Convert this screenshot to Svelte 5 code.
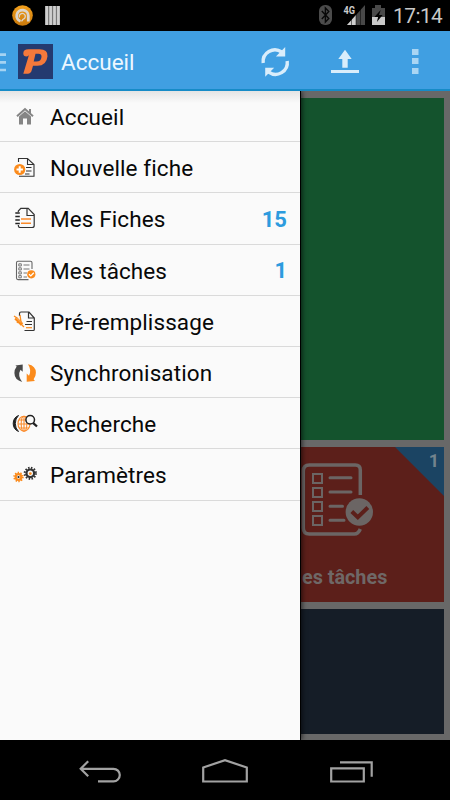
<script>
  const items = [
    { id: 'home', label: 'Accueil' },
    { id: 'new', label: 'Nouvelle fiche' },
    { id: 'forms', label: 'Mes Fiches', count: 15 },
    { id: 'tasks', label: 'Mes tâches', count: 1 },
    { id: 'prefill', label: 'Pré-remplissage' },
    { id: 'sync', label: 'Synchronisation' },
    { id: 'search', label: 'Recherche' },
    { id: 'settings', label: 'Paramètres' }
  ];
</script>

<div class="phone">
  <header class="status">
    <svg width="70" height="31" viewBox="0 0 70 31">
      <defs><linearGradient id="av" x2="0" y2="1"><stop stop-color="#f2a01c" /><stop offset="1" stop-color="#c9790c" /></linearGradient></defs>
      <circle cx="22.5" cy="15.5" r="10.3" fill="url(#av)" />
      <path d="M20.500 21.300A5.800 5.800 0 1 1 28.300 15.800V21.500" fill="none" stroke="#ddd6cc" stroke-width="2.800" />
      <path d="M19.500 17.500a3 3 0 1 1 3.500 1.800l-1.500 2" fill="none" stroke="#ddd6cc" stroke-width="1.300" />
      <path d="M45 6h15v19h-15z" fill="#777" />
      <path d="M46.700 6v19M50.600 6v19M54.500 6v19M58.400 6v19" stroke="#cfcfcf" stroke-width="2.700" />
    </svg>
    <div class="right">
      <svg width="70" height="31" viewBox="317 0 70 31">
        <rect x="319" y="5" width="13" height="20" rx="6" fill="#4b4b4b" />
        <path d="M321.800 11l7 7.500-3.400 3.500V8l3.400 3.500-7 7.500" fill="none" stroke="#080808" stroke-width="1.400" />
        <path d="M347 25l18-20v20z" fill="#484848" />
        <path d="M347 25l9-10v10z" fill="#d0d0d0" />
        <path d="M351.500 5v20M356 5v20M360.500 5v20" stroke="#000" stroke-width=".5" />
        <path d="M342 4h13v11h-13z" fill="#000" />
        <text x="343.500" y="14.300" font-size="11" font-weight="700" fill="#ccc" textLength="11.500" lengthAdjust="spacingAndGlyphs">4G</text>
        <path d="M372 8h3V5h6v3h4v9h-13z" fill="#494949" />
        <path d="M372 17h13v8h-13z" fill="#c9c9c9" />
        <path d="M380.700 10l-6.300 7h3.700l-1.200 5 5.700-7h-3.600z" fill="#000" />
      </svg>
      <span class="clock">17:14</span>
    </div>
  </header>

  <div class="bar">
    <svg class="logo" width="58" height="60" viewBox="0 31 58 60">
      <path d="M0 54.700h6M0 62.400h6M0 70h6" stroke="#a5d3f2" stroke-width="2.700" />
      <rect x="18" y="44" width="35" height="35" fill="#243a70" />
      <path d="M28.500 49.300H39.500q8.500 0 8 7-1 9.500-10 9.500H33l-1.200 4.200q-1 3.800-4 3.800H23.300L29 54.700q-.5 1.800-2.500 1.800-3.200 0-3.200-3.200 0-4 5.200-4zM35.500 53.800L33.700 61.500h2.800q4.500 0 5-4.500.2-3.200-3-3.200z" fill="#f5793b" fill-rule="evenodd" />
    </svg>
    <h1>Accueil</h1>
    <svg class="actions" width="200" height="60" viewBox="250 31 200 60">
      <g fill="none" stroke="#d9edfb" stroke-width="3.400">
        <path d="M263.200 63a11.800 11.800 0 0 1 18.500-11M287.200 61a11.800 11.800 0 0 1-18.500 11.200" />
      </g>
      <path d="M285.200 47v9.500h-9.300zM265.200 76.700v-9h9z" fill="#d9edfb" />
      <path d="M345 49.800l6.700 9.200h-4v8.700h-5.400V59h-4zM331 70h28v3h-28z" fill="#d9edfb" />
      <path d="M412 49h6.500v6H412zM412 58h6.500v6H412zM412 68h6.500v6H412z" fill="#a9d5f3" />
    </svg>
  </div>

  <main>
    <div class="tiles">
      <div class="tile green"></div>
      <div class="tile red">
        <svg width="76" height="76" viewBox="300 462 76 76" fill="none" stroke="#6b6564" stroke-width="3.500">
          <path d="M360.300 495V470q0-5-5-5h-46q-6 0-6 6v57q0 6 6 6h45q4 0 6-5" />
          <g stroke-width="2"><path d="M313 474h9v9h-9zM313 488h9v9h-9zM313 502h9v9h-9zM313 516h9v9h-9z" /></g>
          <path d="M330 477.700h21M330 492h21M330 506.300h12.500M330 520.200h14" stroke-linecap="round" stroke-width="3" />
          <circle cx="359.300" cy="512" r="13.700" fill="#6b6564" stroke="none" />
          <path d="M351.800 511.500l6 5.700 10-9.700" stroke="#5c1f1a" stroke-width="4" />
        </svg>
        <strong>Mes tâches</strong>
        <span class="corner">1</span>
      </div>
      <div class="tile navy"></div>
    </div>

    <nav>
      {#each items as item (item.id)}
        <a href="#{item.id}">
          <svg width="40" height="50" viewBox="0 0 40 50" fill="none">
            {#if item.id === 'home'}
              <path d="M17 25.300l8-7.300 8 7.300" stroke="#858585" stroke-width="2" />
              <path d="M19 25.500l6-5.300 6 5.300v8h-4v-6h-4v6h-4zM29 18h2v4h-2z" fill="#858585" />
            {:else if item.id === 'new'}
              <path d="M18.500 20v-3.500h9l6.500 6v11.800H19M27.500 16.500v6H34M26 25.500h5.500M26 29h5.500M25 32h4.500" stroke="#333" stroke-width="1.100" />
              <circle cx="19.700" cy="27.500" r="5.600" fill="#fb8b1c" />
              <path d="M19.700 24.300v6.400M16.500 27.500h6.400" stroke="#fff" stroke-width="2" />
            {:else if item.id === 'forms'}
              <path d="M18.300 19v-1l2.500-2.700h7.400l6 6.200v11q0 2-2 2H20q-1.700 0-1.700-2.500M27 16v6.500h7" stroke="#333" stroke-width="1.200" />
              <path d="M15.300 20h4.500M15.300 23.500h4.500M15.300 27h4.500M15.300 30.500h4.500" stroke="#222" stroke-width="1.700" />
              <path d="M21 26h10M21 30.200h10" stroke="#fb8b2c" stroke-width="1.400" />
            {:else if item.id === 'tasks'}
              <path d="M32 24v-6.300q0-1.500-1.500-1.500H18q-1.500 0-1.500 1.500v15.400q0 1.500 1.500 1.500h10.500" stroke="#666" stroke-width="1.100" />
              <path d="M18.800 18.800h2.500v2.200h-2.500zM18.800 22.800h2.500V25h-2.500zM18.800 26.800h2.500V29h-2.500zM18.800 30.600h2.500v2.200h-2.500zM23.500 20h6M23.500 24h6M23.500 28h3.500M23.500 32h3.500" stroke="#777" />
              <circle cx="31.300" cy="29.300" r="4.100" fill="#fb8b1c" />
              <path d="M29 29.200l1.800 1.700 3-3.200" stroke="#fff" stroke-width="1.300" />
            {:else if item.id === 'prefill'}
              <path d="M19.500 20v-2.500q0-1.500 1.500-1.500h8l5.300 6v11.500q0 1-1 1H24.500M28.500 16v6h6M26.500 25.500h5.500M25 28.500h7" stroke="#333" stroke-width="1.200" />
              <path d="M26 31.700h6" stroke="#fb8b1c" stroke-width="1.200" />
              <path d="M15.500 22l6.500 6.500" stroke="#fb8b1c" stroke-width="3.400" />
              <path d="M14 20l3 2M21 28l3 3M17 27l2-3M20 19l1 7" stroke="#fb8b1c" stroke-width="1.300" />
              <path d="M16.500 22l4.500 4.500" stroke="#ffd1a1" stroke-width=".6" />
            {:else if item.id === 'sync'}
              <path d="M22.700 17.500v7.300l-2.200-2.100q-3.300 5.800 1.700 12.200-7.800-2.100-7.800-8.900 0-3.500 2.300-6.400l-1.300-1z" fill="#484848" />
              <path d="M28 17.300q7.900 1.500 7.900 8.500 0 3.500-2.300 6.500l1.300 1.700-8.200.8v-8.400l2.300 2.300q2.900-5.300-1-11.400z" fill="#fb8b1c" />
            {:else if item.id === 'search'}
              <path d="M18.500 17.500q-5.300 2.200-5.300 8t5.300 8q-3.200-3-3.200-8t3.200-8z" fill="#222" stroke="#222" />
              <g stroke="#fb8b2c" stroke-width="1.100"><ellipse cx="24" cy="25.700" rx="6" ry="7.500" /><ellipse cx="24" cy="25.700" rx="2.800" ry="7.500" /><path d="M24 18v15M19 22h10M18 26h12M19 30h10" /></g>
              <circle cx="30.200" cy="21.800" r="4.300" fill="#fafafa" stroke="#222" stroke-width="1.500" />
              <path d="M33 24.800l4 3.700" stroke="#222" stroke-width="2.300" />
            {:else}
              <circle cx="18.500" cy="28" r="4.400" stroke="#fb8b1c" stroke-width="1.700" stroke-dasharray="1.400 1.365" />
              <circle cx="18.500" cy="28" r="2.800" stroke="#fb8b1c" stroke-width="2.200" />
              <circle cx="18.500" cy="28" r="1.100" fill="#222" />
              <circle cx="30.300" cy="24.300" r="5.600" stroke="#333" stroke-width="2" stroke-dasharray="1.500 1.432" />
              <circle cx="30.300" cy="24.300" r="3.800" stroke="#333" stroke-width="2.200" />
              <circle cx="30.300" cy="24.600" r="1.400" fill="#fb8b1c" />
            {/if}
          </svg>
          <span class="label">{item.label}</span>
          {#if item.count}<b>{item.count}</b>{/if}
        </a>
      {/each}
    </nav>
  </main>

  <footer>
    <svg width="450" height="60" viewBox="0 740 450 60" fill="none" stroke="#a2a2a2" stroke-width="2.200">
      <path d="M88.200 761.300l-7.500 7.500 7.500 7.500M81 768.800h32.500a6.300 6.300 0 0 1 0 12.600H98" />
      <path d="M203.200 781.500V767.500l21.800-7.300 21.800 7.300v14z" />
      <path d="M331.200 768.300h32.600v13.200h-32.600zM340 762.300h31.700v14.500" />
    </svg>
  </footer>
</div>

<style>
  :global(body) { margin: 0; background: #000; }
  .phone { width: 450px; height: 800px; display: flex; flex-direction: column; overflow: hidden; background: #000; font-family: Roboto, sans-serif; }
  svg { display: block; flex: none; }
  .status { height: 31px; display: flex; justify-content: space-between; }
  .right { display: flex; align-items: center; }
  .clock { width: 57px; margin-left: 6px; font-size: 20.8px; letter-spacing: -.5px; line-height: 31px; color: #c9c9c9; padding-top: 2px; box-sizing: border-box; }
  .bar { height: 60px; box-sizing: border-box; display: flex; background: #409fe2; border-bottom: 2px solid #168bc7; }
  h1 { margin: 0 0 0 3px; font-size: 22.5px; font-weight: 400; line-height: 63px; color: #edf7ff; flex: 1; }
  main { height: 649px; position: relative; overflow: hidden; background: #686868; }
  .tiles { display: flex; flex-direction: column; gap: 7px; padding: 7px 6px 6px 232px; }
  .tile { position: relative; }
  .green { height: 342px; background: #14532d; }
  .red { height: 155px; background: #5c1f1a; display: flex; flex-direction: column; align-items: center; }
  .red svg { margin-top: 15px; }
  .red strong { margin: 28px 4px 0 0; font-size: 19.8px; line-height: 24px; color: #6f6867; }
  .corner { position: absolute; right: 0; top: 0; width: 49px; height: 49px; box-sizing: border-box; padding: 2px 5px 0 0; text-align: right; font-size: 18px; line-height: 24px; font-weight: 700; color: #73838d; background: #1b4463; clip-path: polygon(0 0, 100% 0, 100% 100%); }
  .navy { height: 125px; background: #151d27; }
  nav { position: absolute; left: 0; top: 0; width: 300px; height: 649px; background: linear-gradient(#e4e4e4, #fafafa 12px); border-right: 1px solid #000; box-shadow: 1px 0 5px rgba(0, 0, 0, .65); }
  nav a { display: flex; align-items: center; height: 51.2px; box-sizing: border-box; border-bottom: 1.500px solid #dadada; color: #080808; text-decoration: none; font-size: 22.5px; }
  .label { margin-left: 10px; flex: 1; padding-top: 2px; letter-spacing: .1px; }
  nav b { color: #2d9bde; margin-right: 13px; font-weight: 700; font-size: 22px; padding-top: 2px; }
  footer { height: 60px; background: #000; }
</style>
